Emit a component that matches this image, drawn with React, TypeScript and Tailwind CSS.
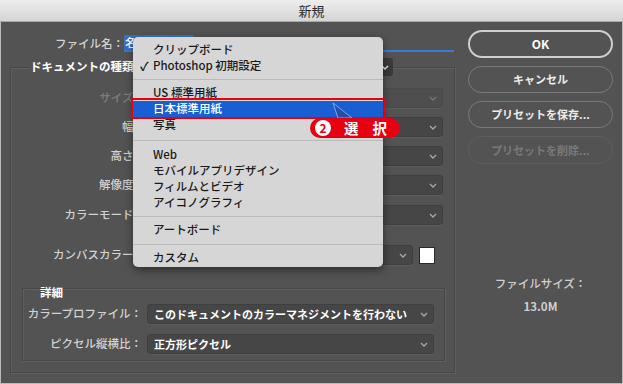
function Chevron({ color = "#a8a8a8" }: { color?: string }) {
  return (
    <svg width="8" height="5" viewBox="0 0 8 5" className="shrink-0">
      <polyline points="1,1 4,4 7,1" fill="none" stroke={color} strokeWidth="1.3" />
    </svg>
  );
}

function Select({
  className = "",
  text = "",
  disabled = false,
}: {
  className?: string;
  text?: string;
  disabled?: boolean;
}) {
  return (
    <div
      className={`flex items-center justify-between h-[20px] pl-[6px] pr-[5px] rounded-[3px] border ${
        disabled ? "bg-[#4e4e4e] border-[#4a4a4a]" : "bg-[#464646] border-[#3f3f3f]"
      } shadow-[0_1px_0_#5c5c5c] ${className}`}
    >
      <span className="text-white font-bold text-[11px] leading-none whitespace-nowrap">{text}</span>
      <Chevron color={disabled ? "#777" : "#a8a8a8"} />
    </div>
  );
}

function Row({
  label,
  disabled = false,
  className = "",
}: {
  label: string;
  disabled?: boolean;
  className?: string;
}) {
  return (
    <div className={`flex items-center h-[20px] ${className}`}>
      <div
        className={`w-[134px] text-right text-[11.5px] font-medium ${
          disabled ? "text-[#7d7d7d]" : "text-[#d2d2d2]"
        }`}
      >
        {label}：
      </div>
      <Select className="ml-[2px] w-[296px]" disabled={disabled} />
    </div>
  );
}

function MenuItem({ text, check = false, active = false }: { text: string; check?: boolean; active?: boolean }) {
  return (
    <div
      className={`relative h-[16px] flex items-center pl-[20px] text-[11.5px] font-medium ${
        active ? "bg-[#1a5fd2] text-white" : "text-[#1a1a1a]"
      }`}
    >
      {check && <span className="absolute left-[7px] text-[12px] font-bold">✓</span>}
      {text}
    </div>
  );
}

function Sep({ h }: { h: string }) {
  return (
    <div className={`flex items-center ${h}`}>
      <div className="w-full h-px bg-[#bababa]" />
    </div>
  );
}

export default function App() {
  return (
    <div className="relative w-[623px] h-[384px] overflow-hidden bg-[#535353] font-['Noto_Sans_CJK_JP',sans-serif]">
      {/* title bar */}
      <div className="h-[22px] flex items-center justify-center bg-gradient-to-b from-[#ededed] to-[#d5d5d5] border-b border-[#a9a9a9] text-[13px] text-[#2b2b2b]">
        新規
      </div>

      <div className="flex h-[362px] border-x border-b border-[#b9b9b9]">
        {/* left column */}
        <div className="w-[454px] flex flex-col">
          <div className="mt-[13px] flex items-center h-[17px]">
            <div className="w-[123px] text-right text-[11.5px] font-medium text-[#d2d2d2]">ファイル名：</div>
            <div className="w-[330px] h-[17px] border-b-2 border-[#3b7ad6] flex items-center">
              <span className="bg-[#3a6fbe] text-white text-[11.5px] font-medium leading-[15px] px-[1px]">
                名称未設定-1
              </span>
            </div>
          </div>

          {/* document type group */}
          <div className="mt-[15px] ml-[9px] w-[445px] h-[306px] border border-[#474747] shadow-[inset_1px_1px_0_#5f5f5f,1px_1px_0_#5f5f5f] flex flex-col">
            <div className="-mt-[10px] ml-[19px] flex items-center h-[18px]">
              <span className="bg-[#535353] text-white font-bold text-[11.5px] pr-[2px]">ドキュメントの種類</span>
              <div className="ml-[2px] w-[255px] h-[18px] bg-[#3a3a3a] rounded-[3px] flex items-center justify-end pr-[4px]">
                <Chevron color="#f0f0f0" />
              </div>
            </div>
            <Row label="サイズ" disabled className="mt-[12px]" />
            <Row label="幅" className="mt-[9px]" />
            <Row label="高さ" className="mt-[9px]" />
            <Row label="解像度" className="mt-[9px]" />
            <Row label="カラーモード" className="mt-[10px]" />
            <div className="flex items-center h-[20px] mt-[20px]">
              <div className="w-[134px] text-right text-[11.5px] font-medium text-[#d2d2d2]">カンバスカラー：</div>
              <Select className="ml-[2px] w-[266px]" />
              <div className="ml-[6px] w-[16px] h-[17px] bg-white border border-[#2a2a2a]" />
            </div>

            {/* details group */}
            <div className="mt-[23px] ml-[11px] w-[423px] h-[73px] border border-[#474747] shadow-[inset_1px_1px_0_#5f5f5f,1px_1px_0_#5f5f5f] flex flex-col">
              <div className="-mt-[4px] ml-[17px] h-[14px] leading-[14px] text-white font-bold text-[11.5px]">詳細</div>
              <div className="mt-[5px] flex items-center h-[20px]">
                <div className="w-[119px] text-right text-[11.5px] font-medium text-[#d2d2d2]">カラープロファイル：</div>
                <Select className="ml-[5px] w-[287px]" text="このドキュメントのカラーマネジメントを行わない" />
              </div>
              <div className="mt-[10px] flex items-center h-[20px]">
                <div className="w-[119px] text-right text-[11.5px] font-medium text-[#d2d2d2]">ピクセル縦横比：</div>
                <Select className="ml-[5px] w-[287px]" text="正方形ピクセル" />
              </div>
            </div>
          </div>
        </div>

        {/* right column */}
        <div className="flex-1 flex flex-col">
          <div className="mt-[8px] ml-[13px] w-[145px] h-[28px] rounded-full border-2 border-[#cfcfcf] flex items-center justify-center text-white font-bold text-[12px]">
            OK
          </div>
          <div className="mt-[8px] ml-[13px] w-[145px] h-[27px] rounded-full border-[1.5px] border-[#7a7a7a] flex items-center justify-center text-[#ececec] font-bold text-[11px]">
            キャンセル
          </div>
          <div className="mt-[8px] ml-[13px] w-[145px] h-[27px] rounded-full border-[1.5px] border-[#7a7a7a] flex items-center justify-center text-[#ececec] font-bold text-[11px]">
            プリセットを保存...
          </div>
          <div className="mt-[8px] ml-[13px] w-[145px] h-[28px] rounded-full border-[1.5px] border-[#5e5e5e] flex items-center justify-center text-[#7a7a7a] font-bold text-[11px]">
            プリセットを削除...
          </div>
          <div className="mt-[112px] ml-[13px] w-[145px] text-center text-[11.5px] leading-[14px] font-medium text-[#cfcfcf]">
            ファイルサイズ：
          </div>
          <div className="mt-[9px] ml-[13px] w-[145px] text-center text-[11.5px] leading-[14px] font-bold text-[#cfcfcf]">
            13.0M
          </div>
        </div>
      </div>

      {/* open dropdown menu */}
      <div className="absolute left-[133px] top-[37px] w-[250px] h-[230px] bg-[#d6d6d6] rounded-[5px] shadow-[0_3px_8px_rgba(0,0,0,0.45)] flex flex-col pt-[5px]">
        <MenuItem text="クリップボード" />
        <MenuItem text="Photoshop 初期設定" check />
        <Sep h="h-[11px]" />
        <MenuItem text="US 標準用紙" />
        <MenuItem text="日本標準用紙" active />
        <MenuItem text="写真" />
        <Sep h="h-[14px]" />
        <MenuItem text="Web" />
        <MenuItem text="モバイルアプリデザイン" />
        <MenuItem text="フィルムとビデオ" />
        <MenuItem text="アイコノグラフィ" />
        <Sep h="h-[11px]" />
        <MenuItem text="アートボード" />
        <Sep h="h-[12px]" />
        <MenuItem text="カスタム" />
      </div>

      {/* red selection frame */}
      <div className="absolute left-[131px] top-[98px] w-[255px] h-[21px] border-[2.5px] border-[#e60012]" />

      {/* callout pointer */}
      <svg className="absolute left-[328px] top-[100px]" width="28" height="20" viewBox="0 0 28 20">
        <polygon points="5,3 10,18 24,18" fill="#2350a6" stroke="#9ab8ea" strokeWidth="0.8" />
      </svg>

      {/* callout */}
      <div className="absolute left-[310px] top-[118px] w-[90px] h-[20px] rounded-full bg-[#e60012] flex items-center pl-[5px] whitespace-nowrap">
        <div className="w-[16px] h-[16px] rounded-full bg-white flex items-center justify-center text-[#e60012] font-bold text-[12px] leading-none">
          2
        </div>
        <span className="ml-[13px] text-white font-bold text-[14.5px] leading-none">選</span>
        <span className="ml-[14px] text-white font-bold text-[14.5px] leading-none">択</span>
      </div>
    </div>
  );
}
